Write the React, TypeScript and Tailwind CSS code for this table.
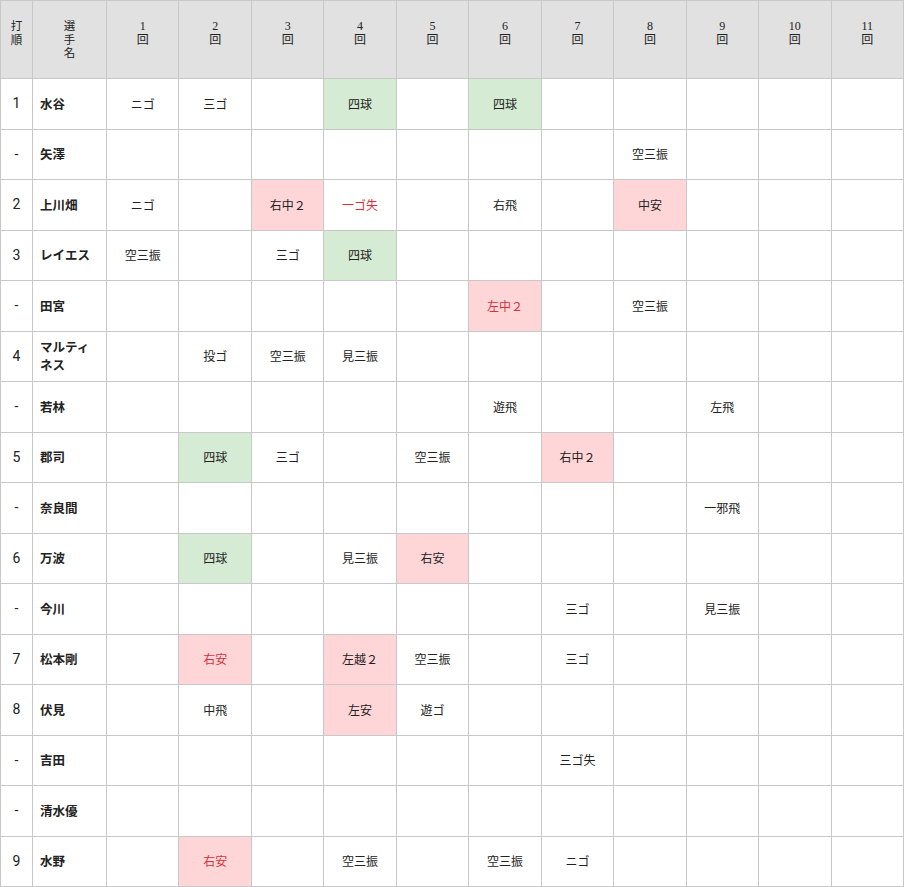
import type { JSX } from 'react';

type Cell = { text: string; bg?: 'hit' | 'walk'; red?: boolean };

type Row = {
  order: string;
  name: string;
  cells: Record<number, Cell>;
};

const rows: Row[] = [
  { order: '1', name: '水谷', cells: { 1: { text: 'ニゴ' }, 2: { text: '三ゴ' }, 4: { text: '四球', bg: 'walk' }, 6: { text: '四球', bg: 'walk' } } },
  { order: '-', name: '矢澤', cells: { 8: { text: '空三振' } } },
  {
    order: '2',
    name: '上川畑',
    cells: {
      1: { text: 'ニゴ' },
      3: { text: '右中２', bg: 'hit' },
      4: { text: '一ゴ失', red: true },
      6: { text: '右飛' },
      8: { text: '中安', bg: 'hit' },
    },
  },
  { order: '3', name: 'レイエス', cells: { 1: { text: '空三振' }, 3: { text: '三ゴ' }, 4: { text: '四球', bg: 'walk' } } },
  { order: '-', name: '田宮', cells: { 6: { text: '左中２', bg: 'hit', red: true }, 8: { text: '空三振' } } },
  { order: '4', name: 'マルティネス', cells: { 2: { text: '投ゴ' }, 3: { text: '空三振' }, 4: { text: '見三振' } } },
  { order: '-', name: '若林', cells: { 6: { text: '遊飛' }, 9: { text: '左飛' } } },
  {
    order: '5',
    name: '郡司',
    cells: { 2: { text: '四球', bg: 'walk' }, 3: { text: '三ゴ' }, 5: { text: '空三振' }, 7: { text: '右中２', bg: 'hit' } },
  },
  { order: '-', name: '奈良間', cells: { 9: { text: '一邪飛' } } },
  { order: '6', name: '万波', cells: { 2: { text: '四球', bg: 'walk' }, 4: { text: '見三振' }, 5: { text: '右安', bg: 'hit' } } },
  { order: '-', name: '今川', cells: { 7: { text: '三ゴ' }, 9: { text: '見三振' } } },
  {
    order: '7',
    name: '松本剛',
    cells: {
      2: { text: '右安', bg: 'hit', red: true },
      4: { text: '左越２', bg: 'hit' },
      5: { text: '空三振' },
      7: { text: '三ゴ' },
    },
  },
  { order: '8', name: '伏見', cells: { 2: { text: '中飛' }, 4: { text: '左安', bg: 'hit' }, 5: { text: '遊ゴ' } } },
  { order: '-', name: '吉田', cells: { 7: { text: '三ゴ失' } } },
  { order: '-', name: '清水優', cells: {} },
  {
    order: '9',
    name: '水野',
    cells: {
      2: { text: '右安', bg: 'hit', red: true },
      4: { text: '空三振' },
      6: { text: '空三振' },
      7: { text: 'ニゴ' },
    },
  },
];

const innings = [1, 2, 3, 4, 5, 6, 7, 8, 9, 10, 11];

function Stack({ chars }: { chars: string[] }): JSX.Element {
  return (
    <div className="flex flex-col items-center leading-[13.5px]">
      {chars.map((c, i) => (
        <span key={i}>{c}</span>
      ))}
    </div>
  );
}

export default function App(): JSX.Element {
  return (
    <div className="w-[904px] bg-white font-['Noto_Sans_CJK_JP',sans-serif] text-[#222]">
      <table className="w-[904px] table-fixed border-collapse border border-[#c8c8c8]">
        <colgroup>
          <col className="w-[32px]" />
          <col className="w-[74px]" />
          {innings.map((n) => (
            <col key={n} />
          ))}
        </colgroup>
        <thead>
          <tr className="h-[78px] bg-[#e1e1e1]">
            <th className="border border-[#c8c8c8] pt-[18px] align-top text-[11.5px] font-normal">
              <Stack chars={['打', '順']} />
            </th>
            <th className="border border-[#c8c8c8] pt-[18px] align-top text-[11.5px] font-normal">
              <Stack chars={['選', '手', '名']} />
            </th>
            {innings.map((n) => (
              <th
                key={n}
                className="border border-[#c8c8c8] pt-[19px] align-top font-['Liberation_Serif','Noto_Sans_CJK_JP',serif] text-[12px] font-normal"
              >
                <Stack chars={[String(n), '回']} />
              </th>
            ))}
          </tr>
        </thead>
        <tbody>
          {rows.map((row, r) => (
            <tr key={r} className="h-[50.5px]">
              <td className="border border-[#c8c8c8] text-center font-['Roboto',sans-serif] text-[14px]">
                {row.order}
              </td>
              <td className="border border-[#c8c8c8] px-[7px] text-[12.5px] font-bold leading-[18px]">
                {row.name === 'マルティネス' ? (
                  <>
                    マルティ
                    <br />
                    ネス
                  </>
                ) : (
                  row.name
                )}
              </td>
              {innings.map((n) => {
                const cell = row.cells[n];
                const bg =
                  cell?.bg === 'hit' ? 'bg-[#ffd6d7]' : cell?.bg === 'walk' ? 'bg-[#d5ebd4]' : '';
                const color = cell?.red ? 'text-[#d6323c]' : '';
                return (
                  <td
                    key={n}
                    className={`border border-[#c8c8c8] text-center text-[12px] ${bg} ${color}`}
                  >
                    {cell?.text}
                  </td>
                );
              })}
            </tr>
          ))}
        </tbody>
      </table>
    </div>
  );
}
